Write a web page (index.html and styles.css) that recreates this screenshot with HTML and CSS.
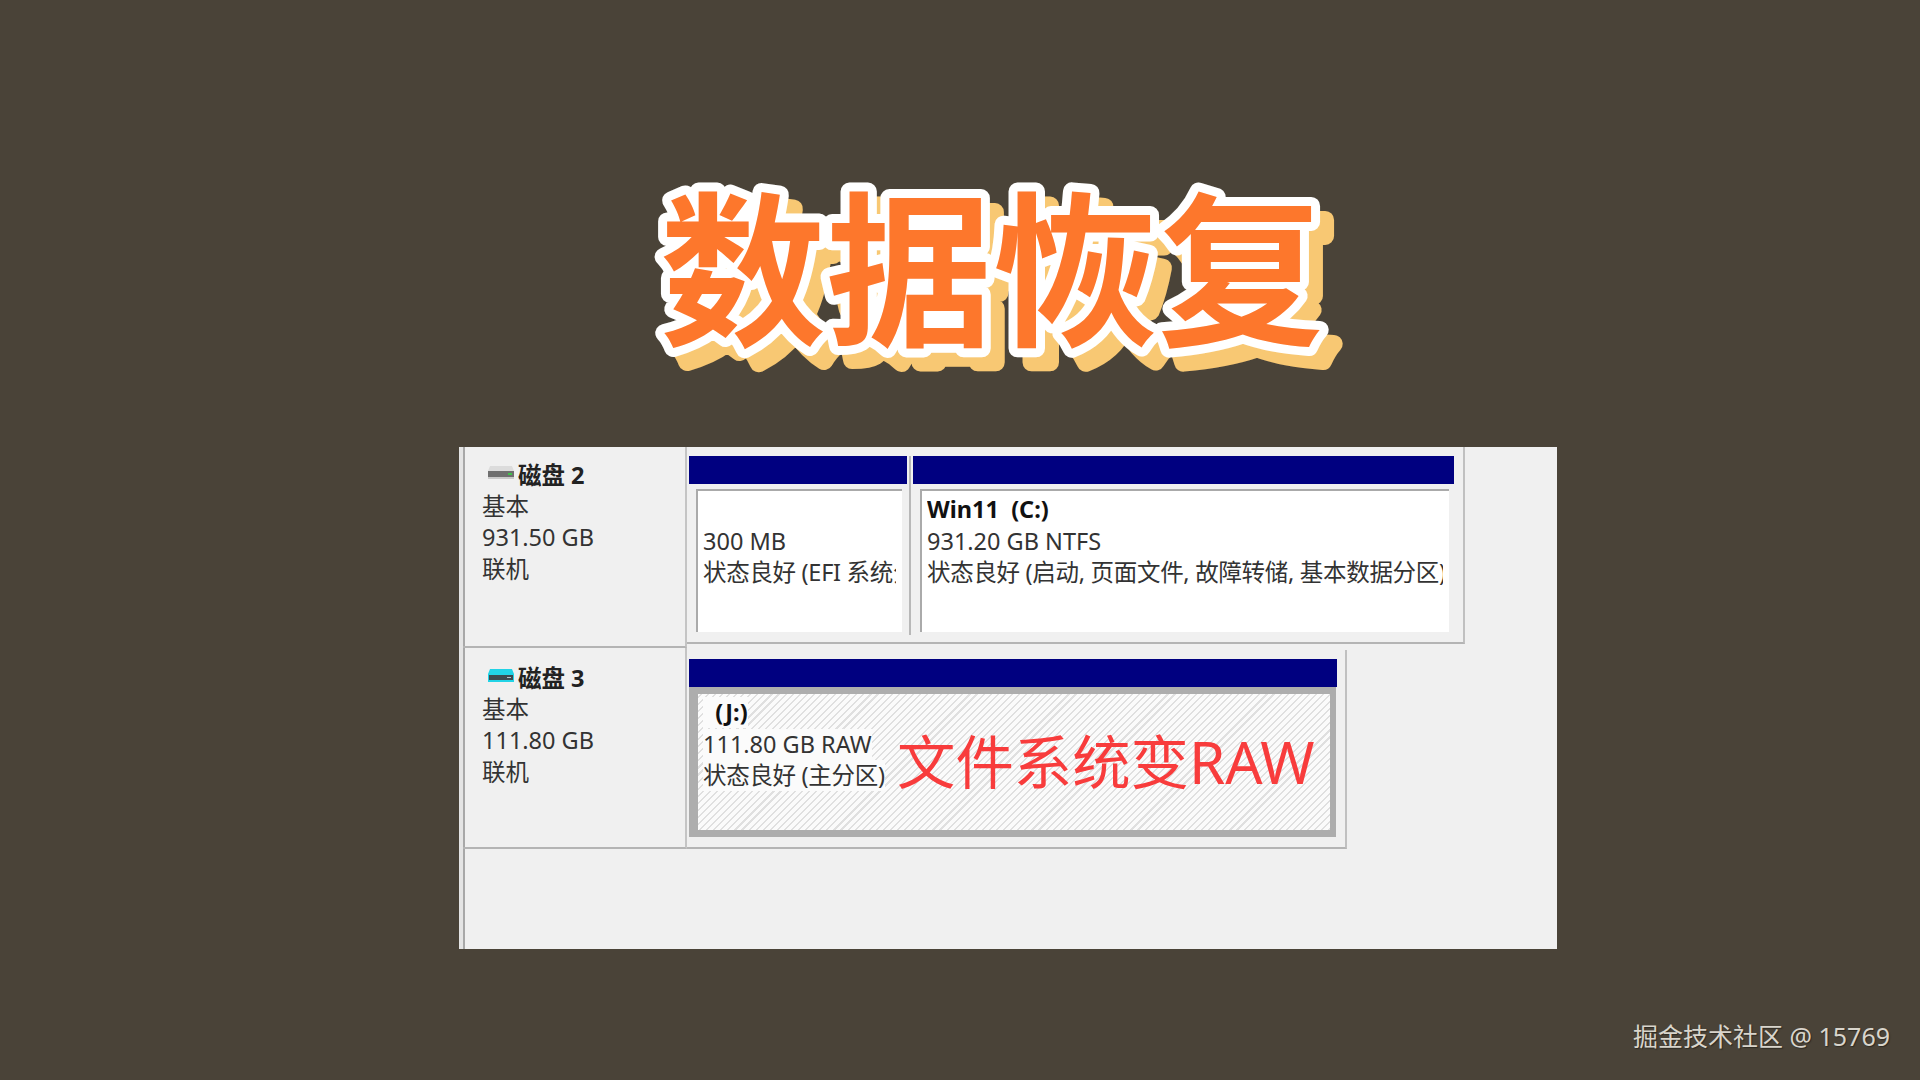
FILE: index.html
```html
<!DOCTYPE html>
<html lang="zh-CN">
<head>
  <meta charset="UTF-8">
  <meta name="viewport" content="width=device-width, initial-scale=1.0">
  <title>数据恢复</title>
  <link rel="stylesheet" href="styles.css">
</head>
<body>
  <h1 class="headline">
    <svg class="headline-art" viewBox="0 0 1920 447" width="1920" height="447">
      <text x="660" y="333">数据恢复</text>
    </svg>
  </h1>

  <div class="panel">
    <!-- 磁盘 2 -->
    <div class="disk-row">
      <div class="disk-info">
        <p class="disk-name">
          <svg class="disk-icon" viewBox="0 0 28 16" width="28" height="16">
            <path d="M3 1h22l2 5H1z" fill="#dcdcdc"/>
            <rect x="1" y="6" width="26" height="6" fill="#6f6f6f"/>
            <rect x="21" y="8" width="4" height="2" fill="#3fc24a"/>
            <rect x="1" y="12" width="26" height="2" fill="#c9c9c9"/>
          </svg>
          磁盘 2
        </p>
        <p>基本</p>
        <p>931.50 GB</p>
        <p>联机</p>
      </div>
      <div class="track track-wide">
        <div class="volume volume-efi">
          <div class="volume-bar"></div>
          <div class="volume-body">
            <div class="volume-box">
              <p>&nbsp;</p>
              <p>300 MB</p>
              <p class="status">状态良好 (EFI 系统分区)</p>
            </div>
          </div>
        </div>
        <div class="volume volume-main">
          <div class="volume-bar"></div>
          <div class="volume-body">
            <div class="volume-box">
              <p class="volume-name">Win11&nbsp; (C:)</p>
              <p>931.20 GB NTFS</p>
              <p class="status">状态良好 (启动, 页面文件, 故障转储, 基本数据分区)</p>
            </div>
          </div>
        </div>
      </div>
    </div>

    <!-- 磁盘 3 -->
    <div class="disk-row">
      <div class="disk-info">
        <p class="disk-name">
          <svg class="disk-icon" viewBox="0 0 28 16" width="28" height="16">
            <path d="M3 1h22l2 5v8H1V6z" fill="#22d3e6"/>
            <rect x="2" y="7" width="24" height="5" fill="#3d4a50"/>
            <rect x="20" y="9" width="4" height="1" fill="#b8c4c8"/>
          </svg>
          磁盘 3
        </p>
        <p>基本</p>
        <p>111.80 GB</p>
        <p>联机</p>
      </div>
      <div class="track track-narrow">
        <div class="volume volume-raw">
          <div class="volume-bar"></div>
          <div class="volume-body">
            <div class="volume-box">
              <p class="volume-name"><span>&nbsp;&nbsp;(J:)</span></p>
              <p><span>111.80 GB RAW</span></p>
              <p class="status"><span>状态良好 (主分区)</span></p>
              <div class="raw-note">文件系统变RAW</div>
            </div>
          </div>
        </div>
      </div>
    </div>
  </div>

  <div class="watermark">掘金技术社区 @ 15769</div>
</body>
</html>
```

FILE: styles.css
```css
body {
  font-family: "Noto Sans", "Noto Sans CJK SC", sans-serif;
  margin: 0;
  padding: 0;
  height: 1080px;
  overflow: hidden;
  position: relative;
  background: #4a4338;
  color: #333;
}

p {
  margin: 0;
}

/* 标题 */
.headline {
  margin: 0;
  height: 447px;
}

.headline-art {
  display: block;
}

.headline-art text {
  font-family: "Noto Sans CJK SC", sans-serif;
  font-size: 166px;
  font-weight: 700;
  fill: #fd772c;
  stroke: #fff;
  stroke-width: 18px;
  stroke-linejoin: round;
  paint-order: stroke fill;
  filter: drop-shadow(14px 14px 0 #f8c873);
}

/* 磁盘面板 */
.panel {
  margin-left: 459px;
  width: 1098px;
  height: 502px;
  box-sizing: border-box;
  background: #f0f0f0;
  border-left: 4px solid #e4e4e4;
  box-shadow: inset 2px 0 0 #a8a8a8;
  font-size: 23.5px;
  line-height: 31.5px;
}

.disk-row {
  display: flex;
  height: 201px;
}

.disk-info {
  box-sizing: border-box;
  width: 224px;
  padding: 13px 0 0 19px;
  border-right: 2px solid #c4c4c4;
  border-bottom: 2px solid #b4b4b4;
}

.disk-row + .disk-row .disk-info {
  padding-top: 15px;
}

.disk-name {
  display: flex;
  align-items: center;
  gap: 3px;
  margin-bottom: -1px;
  font-weight: 700;
  color: #222;
}

.disk-icon {
  margin: -6px 0 0 5px;
}

.track {
  display: flex;
  box-sizing: border-box;
  height: 197px;
  padding: 9px 7px 0 2px;
  border-right: 2px solid #c0c0c0;
  border-bottom: 2px solid #b4b4b4;
}

.track-wide {
  width: 778px;
  gap: 6px;
}

.track-narrow {
  width: 660px;
  height: 199px;
  margin-top: 2px;
}

.volume-efi {
  width: 218px;
  position: relative;
}

.volume-efi::after {
  content: "";
  position: absolute;
  top: 0;
  right: -4px;
  bottom: 7px;
  width: 2px;
  background: #b8b8b8;
}

.volume-main {
  width: 541px;
}

.volume-raw {
  width: 648px;
}

.volume-bar {
  height: 28px;
  background: #000080;
}

.volume-body {
  height: 153px;
  padding: 5px 5px 5px 7px;
  box-sizing: border-box;
}

.volume-box {
  position: relative;
  box-sizing: border-box;
  height: 100%;
  padding: 3px 6px 0 5px;
  background: #fff;
  border-top: 2px solid #aaa;
  border-left: 2px solid #aaa;
  white-space: nowrap;
  overflow: hidden;
}

.volume-box p {
  overflow: hidden;
}

.volume-name {
  font-weight: 700;
  color: #111;
}

.status {
  letter-spacing: -0.3px;
}

/* RAW 分区 */
.volume-raw .volume-body {
  padding: 7px 6px 7px 9px;
  height: 150px;
  margin-right: 1px;
  background: #adadad;
}

.volume-raw .volume-box {
  padding: 3px 0 0 5px;
  border: 0;
  background: repeating-linear-gradient(-45deg, #e0e0e0 0 1.5px, #fbfbfb 1.5px 5px);
}

.volume-raw p span {
  background: #fbfbfb;
}

.raw-note {
  position: absolute;
  top: 33px;
  left: 199px;
  font-size: 58.4px;
  line-height: 70px;
  color: #f83c3c;
}

.watermark {
  position: absolute;
  right: 30px;
  bottom: 26px;
  font-size: 25px;
  line-height: 36px;
  color: #d9d5cc;
  text-shadow: 1px 1px 1px #2e2a22;
}
```
